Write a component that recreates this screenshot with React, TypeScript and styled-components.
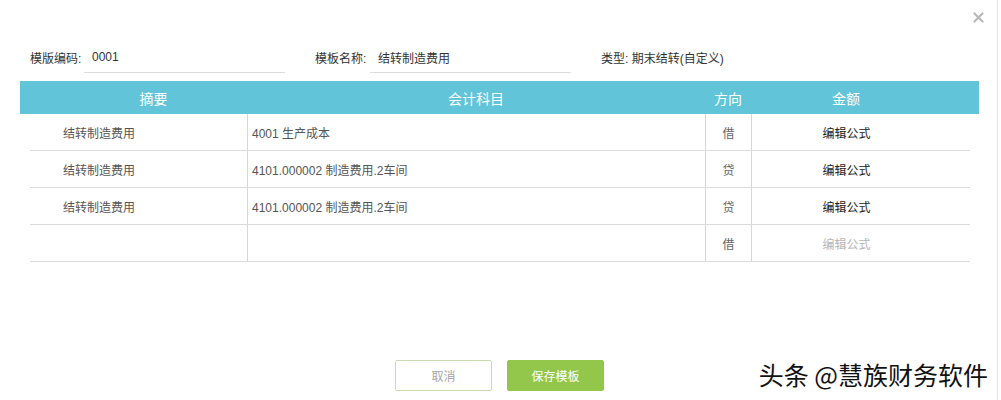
import React from 'react';
import styled, { createGlobalStyle } from 'styled-components';

const GlobalStyle = createGlobalStyle`
  body {
    margin: 0;
    background: #fff;
    font-family: "Liberation Sans", "Noto Sans CJK SC", sans-serif;
  }
`;

interface Entry {
  summary: string;
  account: string;
  direction: string;
  muted?: boolean;
}

const entries: Entry[] = [
  { summary: '结转制造费用', account: '4001 生产成本', direction: '借' },
  { summary: '结转制造费用', account: '4101.000002 制造费用.2车间', direction: '贷' },
  { summary: '结转制造费用', account: '4101.000002 制造费用.2车间', direction: '贷' },
  { summary: '', account: '', direction: '借', muted: true },
];

const Dialog = styled.div`
  position: relative;
  width: 998px;
  height: 400px;
  box-sizing: border-box;
  border-right: 1px solid #e6e6e6;
  background: #fff;
  overflow: hidden;
`;

const TopBar = styled.div`
  height: 34px;
  display: flex;
  justify-content: flex-end;
  align-items: center;
  padding-right: 12px;
`;

const CloseButton = styled.button`
  width: 14px;
  height: 14px;
  padding: 0;
  border: 0;
  background: none;
  display: flex;
  align-items: center;
  justify-content: center;
  cursor: pointer;
`;

const FormRow = styled.div`
  margin-top: 8px;
  padding-left: 30px;
  display: flex;
  align-items: center;
  gap: 30px;
  font-size: 12px;
  color: #333;
`;

const Field = styled.div`
  display: flex;
  align-items: center;
`;

const Label = styled.span<{ $width: number }>`
  width: ${(p) => p.$width}px;
  white-space: nowrap;
`;

const Input = styled.div`
  width: 201px;
  height: 31px;
  box-sizing: border-box;
  padding-left: 8px;
  display: flex;
  align-items: center;
  border-bottom: 1px solid #ddd;
`;

const TypeText = styled.span`
  white-space: nowrap;
`;

const HeaderRow = styled.div`
  margin: 8px 0 0 20px;
  width: 959px;
  height: 33px;
  display: grid;
  grid-template-columns: 227px 458px 46px 228px;
  background: #62c4d8;
  color: #fff;
  font-size: 14px;
`;

const HeaderCell = styled.div<{ $padLeft?: number; $padRight?: number }>`
  display: flex;
  align-items: center;
  justify-content: center;
  padding-left: ${(p) => p.$padLeft ?? 0}px;
  padding-right: ${(p) => p.$padRight ?? 0}px;
`;

const Body = styled.div`
  margin-left: 30px;
  width: 940px;
`;

const Row = styled.div`
  display: grid;
  grid-template-columns: 217px 458px 46px 219px;
  height: 37px;
  box-sizing: border-box;
  border-bottom: 1px solid #dcdcdc;
  font-size: 12px;
`;

const Cell = styled.div<{ $align?: 'left' | 'center'; $pad?: string; $divider?: boolean; $color?: string }>`
  display: flex;
  align-items: center;
  justify-content: ${(p) => (p.$align === 'center' ? 'center' : 'flex-start')};
  padding: ${(p) => p.$pad ?? '0'};
  border-left: ${(p) => (p.$divider ? '1px solid #d6d6d6' : '0')};
  color: ${(p) => p.$color ?? '#555'};
  white-space: nowrap;
`;

const Footer = styled.div`
  margin-top: 98px;
  display: flex;
  justify-content: center;
  gap: 15px;
  padding-left: 2px;
`;

const Button = styled.button<{ $primary?: boolean }>`
  width: 97px;
  height: 31px;
  border-radius: 2px;
  font-family: inherit;
  font-size: 12px;
  cursor: pointer;
  border: 1px solid ${(p) => (p.$primary ? '#92c74c' : '#c9dcae')};
  background: ${(p) => (p.$primary ? '#92c74c' : '#fff')};
  color: ${(p) => (p.$primary ? '#fff' : '#a5a5a5')};
`;

const Watermark = styled.div`
  position: absolute;
  right: 9px;
  bottom: 8px;
  font-size: 25px;
  color: #111;
  white-space: nowrap;
  text-shadow: 0 0 2px #fff, 0 0 2px #fff;
  font-family: "Noto Sans CJK SC", sans-serif;
`;

const App: React.FC = () => {
  return (
    <Dialog>
      <GlobalStyle />
      <TopBar>
        <CloseButton aria-label="close">
          <svg width="11" height="11" viewBox="0 0 11 11">
            <path d="M1.5 1.5 L9.5 9.5 M9.5 1.5 L1.5 9.5" stroke="#b8b8b8" strokeWidth="2.2" strokeLinecap="round" />
          </svg>
        </CloseButton>
      </TopBar>
      <FormRow>
        <Field>
          <Label $width={54}>模版编码:</Label>
          <Input>0001</Input>
        </Field>
        <Field>
          <Label $width={55}>模板名称:</Label>
          <Input>结转制造费用</Input>
        </Field>
        <TypeText>类型: 期末结转(自定义)</TypeText>
      </FormRow>
      <HeaderRow>
        <HeaderCell $padLeft={40}>摘要</HeaderCell>
        <HeaderCell>会计科目</HeaderCell>
        <HeaderCell>方向</HeaderCell>
        <HeaderCell $padRight={38}>金额</HeaderCell>
      </HeaderRow>
      <Body>
        {entries.map((e, i) => (
          <Row key={i}>
            <Cell $pad="0 0 0 33px">{e.summary}</Cell>
            <Cell $pad="0 0 0 4px" $divider>{e.account}</Cell>
            <Cell $align="center" $divider $color="#666">{e.direction}</Cell>
            <Cell $align="center" $pad="0 29px 0 0" $divider $color={e.muted ? '#b5b5b5' : '#222'}>
              编辑公式
            </Cell>
          </Row>
        ))}
      </Body>
      <Footer>
        <Button>取消</Button>
        <Button $primary>保存模板</Button>
      </Footer>
      <Watermark>头条 @慧族财务软件</Watermark>
    </Dialog>
  );
};

export default App;
